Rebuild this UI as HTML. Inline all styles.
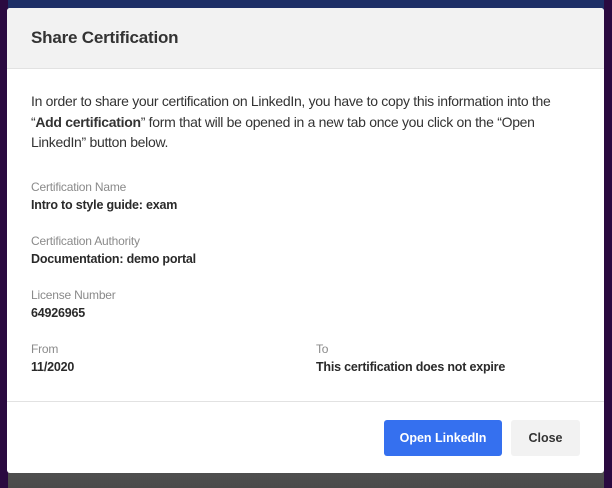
<!DOCTYPE html>
<html><head><meta charset="utf-8"><style>
*{margin:0;padding:0;box-sizing:border-box}
body{width:612px;height:488px;overflow:hidden;font-family:"Liberation Sans",sans-serif;background:linear-gradient(180deg,#1d2f66 0%,#1d3470 88%,#5a5a5a 90%,#4a4a4a 100%);position:relative}
.edge{position:absolute;top:0;bottom:0;left:0;width:8px;background:#2a0a40}
.edge2{position:absolute;top:0;bottom:0;right:0;width:8px;background:#2a0a40}
.m{position:absolute;left:7px;top:8px;width:597px;height:465px;background:#fff;border-radius:3px;overflow:hidden}
.h{height:61px;background:#f2f2f2;border-bottom:1px solid #e2e2e2;padding:0 24px;font-size:17px;font-weight:bold;color:#333;line-height:60px;letter-spacing:-0.2px}
.b{padding:22px 24px 0;color:#333;font-size:14px;letter-spacing:-0.3px}
.p{line-height:20.5px}
.l{color:#8a8a8a;font-size:12px;margin-top:18px;line-height:16px;letter-spacing:-0.2px}
.v{font-weight:bold;font-size:12.5px;line-height:20px;color:#2a2a2a;letter-spacing:-0.2px}
.row{display:flex}.row>div{flex:0 0 auto}
.f{position:absolute;left:0;right:0;top:393px;border-top:1px solid #e2e2e2}
.btn{position:absolute;top:412px;height:36px;border-radius:3px;font-size:12.5px;font-weight:bold;line-height:36px;text-align:center}
</style></head><body>
<div class="edge"></div><div class="edge2"></div>
<div class="m">
<div class="h">Share Certification</div>
<div class="b">
<div class="p">In order to share your certification on LinkedIn, you have to copy this information into the “<b>Add certification</b>” form that will be opened in a new tab once you click on the “Open LinkedIn” button below.</div>
<div class="l" style="margin-top:26px">Certification Name</div><div class="v">Intro to style guide: exam</div>
<div class="l">Certification Authority</div><div class="v">Documentation: demo portal</div>
<div class="l">License Number</div><div class="v">64926965</div>
<div class="row"><div style="width:285px"><div class="l">From</div><div class="v">11/2020</div></div><div style="width:260px"><div class="l">To</div><div class="v">This certification does not expire</div></div></div>
</div>
<div class="f"></div>
<div class="btn" style="left:377px;width:118px;background:#3570ef;color:#fff">Open LinkedIn</div>
<div class="btn" style="left:504px;width:69px;background:#f2f2f2;color:#333">Close</div>
</div>
</body></html>
